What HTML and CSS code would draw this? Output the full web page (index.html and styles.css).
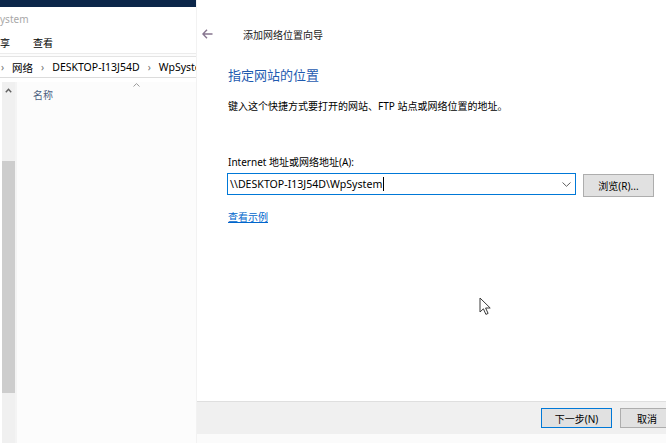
FILE: index.html
```html
<!DOCTYPE html>
<html lang="zh-CN">
<head>
<meta charset="utf-8">
<title>添加网络位置向导</title>
<link rel="stylesheet" href="styles.css">
</head>
<body>
<div class="screen">
  <div class="explorer">
    <div class="ex-titlebar"></div>
    <div class="ex-title">ystem</div>
    <div class="ex-menu"><span>享</span><span>查看</span></div>
    <div class="ex-address">
      <span class="crumb-sep">›</span>
      <span>网络</span>
      <span class="crumb-sep">›</span>
      <span>DESKTOP-I13J54D</span>
      <span class="crumb-sep">›</span>
      <span>WpSystem</span>
    </div>
    <div class="ex-body">
      <div class="scrollbar">
        <div class="sb-up">
          <svg width="7" height="5" viewBox="0 0 7 5"><path d="M0.8 4.2 L3.5 1.2 L6.2 4.2" fill="none" stroke="#606060" stroke-width="1.4"/></svg>
        </div>
        <div class="sb-thumb"></div>
      </div>
      <div class="ex-files">
        <div class="col-header">
          <span class="col-name">名称</span>
          <svg class="sort-caret" width="7" height="4" viewBox="0 0 7 4"><path d="M0.5 3.5 L3.5 0.6 L6.5 3.5" fill="none" stroke="#9a9a9a" stroke-width="1"/></svg>
        </div>
      </div>
    </div>
  </div>

  <div class="dialog">
    <div class="dlg-header">
      <svg class="back" width="11" height="10" viewBox="0 0 11 10"><path d="M5 0.8 L0.9 5 L5 9.2 M0.9 5 H10.5" fill="none" stroke="#86758f" stroke-width="1.4"/></svg>
      <span class="dlg-title">添加网络位置向导</span>
    </div>
    <div class="dlg-content">
      <h1 class="heading">指定网站的位置</h1>
      <p class="desc">键入这个快捷方式要打开的网站、FTP 站点或网络位置的地址。</p>
      <label class="field-label">Internet 地址或网络地址(A):</label>
      <div class="field-row">
        <div class="combo">
          <span class="combo-text">\\DESKTOP-I13J54D\WpSystem</span><span class="text-caret"></span>
          <svg class="chevron" width="9" height="5" viewBox="0 0 9 5"><path d="M0.5 0.5 L4.5 4.3 L8.5 0.5" fill="none" stroke="#606060" stroke-width="1"/></svg>
        </div>
        <button class="btn browse">浏览(R)...</button>
      </div>
      <a class="example-link" href="#">查看示例</a>
    </div>
    <div class="dlg-footer">
      <button class="btn next">下一步(N)</button>
      <button class="btn cancel">取消</button>
    </div>
    <div class="dlg-bottom"></div>
    <svg class="cursor" width="13" height="19" viewBox="0 0 13 19"><path d="M1 1 L1 15 L4.4 11.8 L6.9 17.4 L9.1 16.4 L6.6 11 L11.2 11 Z" fill="#fff" stroke="#3a3a3a" stroke-width="1" stroke-linejoin="round"/></svg>
  </div>
</div>
</body>
</html>
```
FILE: styles.css
```css
* { box-sizing: border-box; }
html, body { margin: 0; padding: 0; }
body {
  width: 666px;
  height: 443px;
  overflow: hidden;
  background: #fff;
  font-family: "Noto Sans", "Noto Sans CJK SC", sans-serif;
  font-size: 10px;
  color: #000;
}
.screen {
  display: flex;
  width: 666px;
  height: 443px;
}

/* explorer window (left) */
.explorer {
  width: 196px;
  flex: none;
  display: flex;
  flex-direction: column;
  background: #fcfcfc;
  overflow: hidden;
}
.ex-titlebar {
  height: 7px;
  background: #0b2649;
  flex: none;
}
.ex-title {
  height: 24px;
  line-height: 24px;
  color: #a8a8a8;
  font-size: 10px;
  background: #fff;
}
.ex-menu {
  height: 23px;
  display: flex;
  align-items: center;
  gap: 23px;
  font-size: 10px;
  background: #fff;
  border-bottom: 1px solid #ececec;
}
.ex-address {
  margin-top: 2px;
  height: 22px;
  border-top: 1px solid #e4e4e4;
  border-bottom: 1px solid #dcdcdc;
  display: flex;
  align-items: center;
  gap: 8px;
  white-space: nowrap;
  font-size: 10.5px;
  background: #fff;
  padding-left: 1px;
}
.crumb-sep { color: #707070; font-size: 10px; }
.ex-body {
  flex: 1;
  display: flex;
  padding-top: 4px;
  background: #fff;
}
.scrollbar {
  width: 13px;
  margin-left: 2px;
  background: #f0f0f0;
  display: flex;
  flex-direction: column;
}
.sb-up {
  height: 20px;
  display: flex;
  justify-content: center;
  padding-top: 6px;
}
.sb-thumb {
  margin-top: 59px;
  height: 232px;
  background: #cdcdcd;
}
.ex-files {
  flex: 1;
  border-left: 2px solid #f4f4f4;
  background: #fcfcfc;
}
.col-header {
  height: 24px;
  display: flex;
  align-items: flex-start;
  padding-left: 16px;
}
.col-name {
  color: #4c5f7f;
  font-size: 10px;
  margin-top: 5px;
}
.sort-caret {
  margin-left: 80px;
  margin-top: 1px;
}

/* wizard dialog (right) */
.dialog {
  flex: 1;
  display: flex;
  flex-direction: column;
  background: #fff;
  position: relative;
  border-left: 1px solid #f2f2f2;
}
.dlg-header {
  height: 20px;
  margin-top: 24px;
  display: flex;
  align-items: center;
  padding-left: 5px;
}
.back { flex: none; }
.dlg-title {
  margin-left: 30px;
  font-size: 10px;
  color: #1a1a1a;
}
.dlg-content {
  padding-left: 31px;
  display: flex;
  flex-direction: column;
  align-items: flex-start;
}
.heading {
  margin: 22px 0 0 0;
  font-size: 13px;
  line-height: 18px;
  font-weight: normal;
  color: #1f5bb0;
}
.desc {
  margin: 15px 0 0 0;
  font-size: 10px;
  line-height: 14px;
}
.field-label {
  margin-top: 42px;
  font-size: 10px;
  line-height: 14px;
}
.field-row {
  margin-top: 4px;
  display: flex;
  align-items: flex-start;
}
.combo {
  width: 349px;
  height: 22px;
  margin-left: -1px;
  border: 1px solid #0078d7;
  background: #fff;
  display: flex;
  align-items: center;
  padding-left: 2px;
  font-size: 10.6px;
}
.combo-text { white-space: nowrap; }
.text-caret {
  width: 1px;
  height: 14px;
  background: #000;
  margin-left: 1px;
}
.chevron { margin-left: auto; margin-right: 4px; }
.btn {
  font-family: "Noto Sans", "Noto Sans CJK SC", sans-serif;
  font-size: 10px;
  background: #e1e1e1;
  border: 1px solid #adadad;
  color: #000;
  padding: 0;
  margin: 0;
}
.browse {
  width: 71px;
  height: 23px;
  margin-left: 7px;
  margin-top: 1px;
}
.example-link {
  margin-top: 13px;
  font-size: 10px;
  line-height: 14px;
  color: #0066cc;
  text-decoration: underline;
}
.dlg-footer {
  margin-top: auto;
  height: 33px;
  background: #f0f0f0;
  border-top: 1px solid #dfdfdf;
  display: flex;
  align-items: flex-start;
  padding-top: 6px;
  padding-left: 344px;
  gap: 8px;
  white-space: nowrap;
}
.next {
  width: 71px;
  height: 20px;
  flex: none;
  border: 1px solid #0078d7;
}
.cancel {
  width: 54px;
  height: 20px;
  flex: none;
}
.dlg-bottom {
  height: 9px;
  background: #fbfbfb;
}
.cursor {
  position: absolute;
  left: 282px;
  top: 297px;
}
```
